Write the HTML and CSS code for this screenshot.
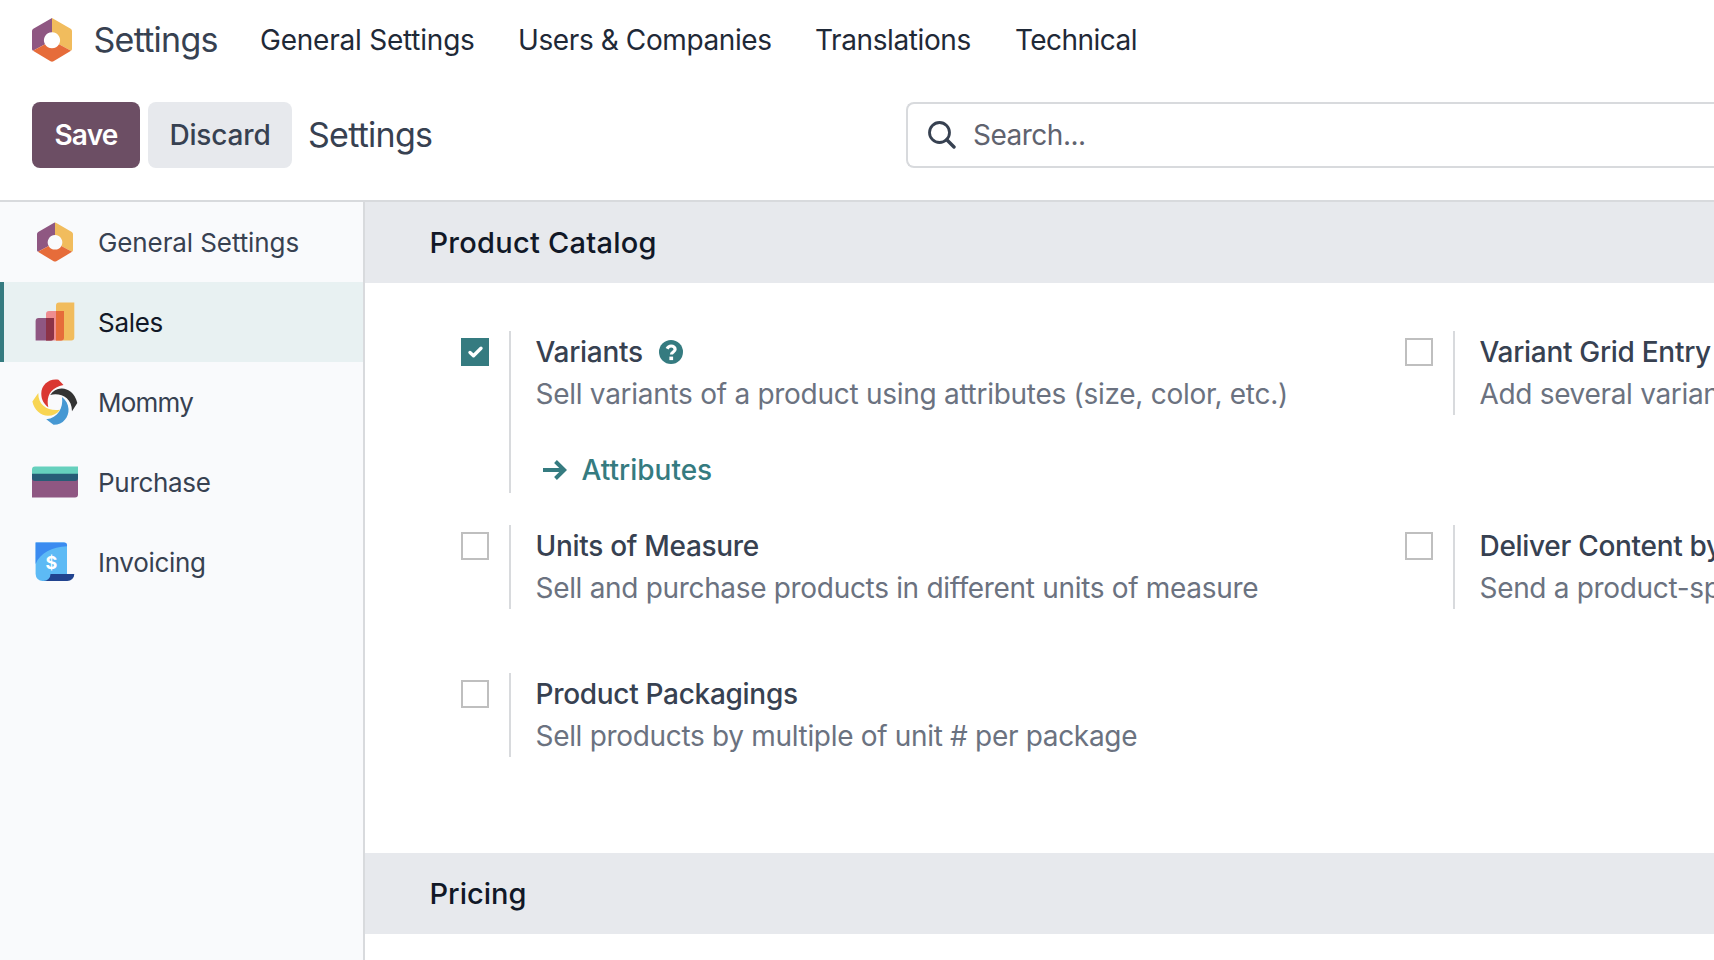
FILE: index.html
```
<!DOCTYPE html>
<html lang="en">
<head>
<meta charset="utf-8">
<title>Settings</title>
<link rel="stylesheet" href="styles.css">
</head>
<body>
<svg class="defs" width="0" height="0" aria-hidden="true">
  <symbol id="hex" viewBox="0 0 40 44">
    <path fill="#8f5782" d="M20 0v14.200a8 8 0 0 0-7 12L1 32.800Q0 32 0 31V13q0-1.500 1.300-2.300z"/>
    <path fill="#f1bc5d" d="M20 0v14.200a8 8 0 0 1 7 12L39 32.800Q40 32 40 31V13q0-1.500-1.300-2.300z"/>
    <path fill="#e66c3a" d="M13 26.200 1 32.800 18.500 43.200q1.500.900 3 0L39 32.800 27 26.200a8 8 0 0 1-14 0z"/>
  </symbol>
</svg>
<nav class="navbar">
  <svg class="brand-icon" viewBox="0 0 40 44"><use href="#hex"/></svg>
  <span class="brand">Settings</span>
  <a class="nav-link general">General Settings</a>
  <a class="nav-link users">Users &amp; Companies</a>
  <a class="nav-link translations">Translations</a>
  <a class="nav-link technical">Technical</a>
</nav>
<div class="control">
  <button class="btn save">Save</button>
  <button class="btn discard">Discard</button>
  <span class="crumb">Settings</span>
  <div class="search">
    <svg class="search-icon" viewBox="0 0 28 28"><circle cx="11.500" cy="11.500" r="10" fill="none" stroke="#374151" stroke-width="2.800"/><path d="M18.800 18.800 26 26" stroke="#374151" stroke-width="3.400" stroke-linecap="round"/></svg>
    <span>Search...</span>
  </div>
</div>
<div class="body">
  <aside class="sidebar">
    <a class="tab"><svg class="tab-icon" viewBox="0 0 46 46"><use href="#hex" x="5" y="3.300" width="36" height="39.600"/></svg><span>General Settings</span></a>
    <a class="tab active"><svg class="tab-icon" viewBox="0 0 46 46">
      <path fill="#f1bc5d" d="M27 3.600h15.300v35a3 3 0 0 1-3 3H24V6.600a3 3 0 0 1 3-3z"/>
      <path fill="#ee8d90" d="M17 12h15v26.600a3 3 0 0 1-3 3H14V15a3 3 0 0 1 3-3z"/>
      <path fill="#e66c3a" d="M24 12h8v26.600a3 3 0 0 1-3 3h-5z"/>
      <path fill="#8f5782" d="M6.600 19H22v19.600a3 3 0 0 1-3 3H3.600V22a3 3 0 0 1 3-3z"/>
      <path fill="#8c3347" d="M14 19h8v19.600a3 3 0 0 1-3 3h-5z"/>
    </svg><span class="wide-cut">Sales</span></a>
    <a class="tab"><svg class="tab-icon" viewBox="0 0 46 46">
      <path fill="#da3732" d="M31.500 6 26.500.700C17-1 9 6 9.300 15c.1 5.500 2.500 10 7 13.200C14 18 18 8.500 31.500 6z"/>
      <path fill="#333" d="M40 32.300 45.300 24C43 14 36 9.500 30 9.400c-5-.2-9 2-11.800 6.600C28 13.500 40 18 40 32.300z"/>
      <path fill="#4698d3" d="M14.200 40.300 21.500 45.800C31 46 37 38 36.500 30c-.3-5-2.600-9-6.500-12C31.500 29 26 39 14.200 40.300z"/>
      <path fill="#f8d553" d="M6.300 14 .4 22.500C2 31 9 36.700 16 36.700c5 0 9-2 12-6C17 32.500 6 27 6.300 14z"/>
    </svg><span class="mommy">Mommy</span></a>
    <a class="tab"><svg class="tab-icon" viewBox="0 0 46 46">
      <path fill="#8f5782" d="M0 16h46v19.600a3 3 0 0 1-3 3H0z"/>
      <path fill="#66d0bd" d="M3 7.400h43V18H0v-7.600a3 3 0 0 1 3-3z"/>
      <path fill="#275c76" d="M0 14.700h46V19a3 3 0 0 1-3 3H3a3 3 0 0 1-3-3z"/>
    </svg><span class="wide-cut">Purchase</span></a>
    <a class="tab"><svg class="tab-icon" viewBox="0 0 46 46">
      <path fill="#5dbaf5" d="M3.600 3.500H32a3 3 0 0 1 3 3V36L18 42h-7.400a7 7 0 0 1-7-7z"/>
      <path fill="#3b8bf0" d="M3.600 3.500H32a3 3 0 0 1 3 3v.800C20 8 8 14 3.600 25z"/>
      <path fill="#21438f" d="M18.500 35h23.800a7 7 0 0 1-7 7H11.500a7 7 0 0 0 7-7z"/>
      <text x="19.300" y="29.500" text-anchor="middle" class="dollar">$</text>
    </svg><span class="wide-cut">Invoicing</span></a>
  </aside>
  <main class="content">
    <h2 class="section catalog">Product Catalog</h2>
    <div class="grid">
      <div class="setting tall"><span class="box checked"><svg viewBox="0 0 28 28"><path d="m9 14.500 3.500 3.200 7.500-7.500" fill="none" stroke="#fff" stroke-width="3.400" stroke-linecap="round" stroke-linejoin="round"/></svg></span>
        <div class="pane">
          <div class="title"><span>Variants</span><svg class="help" viewBox="0 0 24 24"><circle cx="12" cy="12" r="12" fill="#357b80"/><path d="M8.100 8.700C9 6.800 10.300 6 12.100 6c2.300 0 4 1.300 4 3.200 0 2.700-3.500 2.700-3.700 5.300" fill="none" stroke="#fff" stroke-width="3.200"/><rect x="10.400" y="16.600" width="3.700" height="3.500" fill="#fff"/></svg></div>
          <div class="desc">Sell variants of a product using attributes (size, color, etc.)</div>
          <a class="link"><svg class="arrow" viewBox="0 0 24 20"><path d="M0 10h21M12.500 1.500l8.700 8.500-8.700 8.500" fill="none" stroke="#357b80" stroke-width="4"/></svg><span>Attributes</span></a>
        </div></div>
      <div class="setting"><span class="box"></span><div class="pane"><div class="title">Variant Grid Entry</div><div class="desc">Add several variants</div></div></div>
      <div class="setting"><span class="box"></span><div class="pane"><div class="title">Units of Measure</div><div class="desc">Sell and purchase products in different units of measure</div></div></div>
      <div class="setting"><span class="box"></span><div class="pane"><div class="title">Deliver Content by</div><div class="desc">Send a product-specific</div></div></div>
      <div class="setting"><span class="box"></span><div class="pane"><div class="title">Product Packagings</div><div class="desc">Sell products by multiple of unit # per package</div></div></div>
    </div>
    <h2 class="section">Pricing</h2>
  </main>
</div>
</body>
</html>
```
FILE: styles.css
```
* { box-sizing: border-box; }
body { margin: 0; width: 100%; height: 960px; overflow: hidden; background: #fff; color: #374151; font-family: Inter, "Liberation Sans", sans-serif; font-size: 28px; white-space: nowrap; display: flex; flex-direction: column; }
.defs { position: absolute; }
.navbar { height: 80px; flex: none; display: flex; align-items: center; padding-left: 32px; color: #1f2937; }
.brand-icon { width: 40px; height: 44px; }
.brand { font-size: 34px; letter-spacing: -.75px; margin-left: 21.5px; width: 166.5px; padding-bottom: 1px; color: #374151; }
.nav-link { font-size: 28px; letter-spacing: -.4px; }
.general { width: 258px; letter-spacing: -.22px; }
.users { width: 297px; }
.translations { width: 200px; }
.technical { letter-spacing: -.55px; }
.control { height: 122px; flex: none; display: flex; align-items: flex-start; overflow: hidden; padding: 22px 0 0 32px; border-bottom: 2px solid #d8dadd; }
.btn { height: 66px; flex: none; border: 0; border-radius: 8px; padding: 0; font: 500 28px Inter, sans-serif; margin-right: 8px; }
.save { width: 108px; background: #6c4e64; color: #fff; font-weight: 600; letter-spacing: -.8px; }
.discard { width: 144px; background: #e7e9ed; color: #374151; letter-spacing: -.15px; }
.crumb { flex: none; font-size: 34px; letter-spacing: -.75px; line-height: 65px; margin-left: 8px; width: 598px; }
.search { flex: 1; height: 66px; border: 2px solid #d8dadd; border-right: 0; border-radius: 8px 0 0 8px; display: flex; align-items: center; padding-left: 20px; color: #5f636f; letter-spacing: -.5px; }
.search-icon { width: 28px; height: 28px; margin-right: 17px; }
.body { flex: 1; display: flex; min-height: 0; }
.sidebar { width: 365px; flex: none; background: #f9fafc; border-right: 2px solid #d8dadd; }
.tab { height: 80px; display: flex; align-items: center; padding-left: 32px; font-size: 26px; letter-spacing: -.1px; }
.tab span { padding-top: 1px; }
.tab .wide-cut { letter-spacing: -.3px; }
.tab .mommy { letter-spacing: -.75px; }
.tab.active { background: #e8f1f2; color: #111827; border-left: 4px solid #357b80; padding-left: 28px; }
.tab-icon { width: 46px; height: 46px; margin-right: 20px; }
.dollar { font: 700 18px Inter, sans-serif; fill: #fff; }
.content { flex: 1; min-width: 0; overflow: hidden; }
.section { margin: 0; height: 81px; line-height: 81px; background: #e7e9ed; color: #111827; font-size: 29px; font-weight: 500; padding-left: 64.5px; }
.catalog { letter-spacing: .25px; }
.grid { height: 570px; padding: 48px 0 0 96px; display: grid; grid-template-columns: 944px 309px; grid-template-rows: 194px 148px 84px; }
.setting { display: flex; align-items: flex-start; min-width: 0; overflow: hidden; }
.box { width: 28px; height: 28px; margin: 7px 20px 0 0; border: 2px solid #bfbfbf; flex: none; }
.box.checked { border: 0; background: #357b80; }
.box svg { display: block; }
.pane { border-left: 2px solid #d8dadd; padding-left: 24.5px; height: 84px; line-height: 42px; }
.tall .pane { height: 162px; }
.title { font-weight: 500; display: flex; align-items: center; letter-spacing: -.3px; }
.help { width: 24px; height: 24px; margin-left: 16px; }
.desc { color: #6b7280; letter-spacing: -.32px; }
.tall .desc { letter-spacing: -.28px; }
.link { display: flex; align-items: center; margin-top: 34px; padding-left: 7px; color: #357b80; font-weight: 500; }
.arrow { width: 24px; height: 20px; margin-right: 15px; }
```
